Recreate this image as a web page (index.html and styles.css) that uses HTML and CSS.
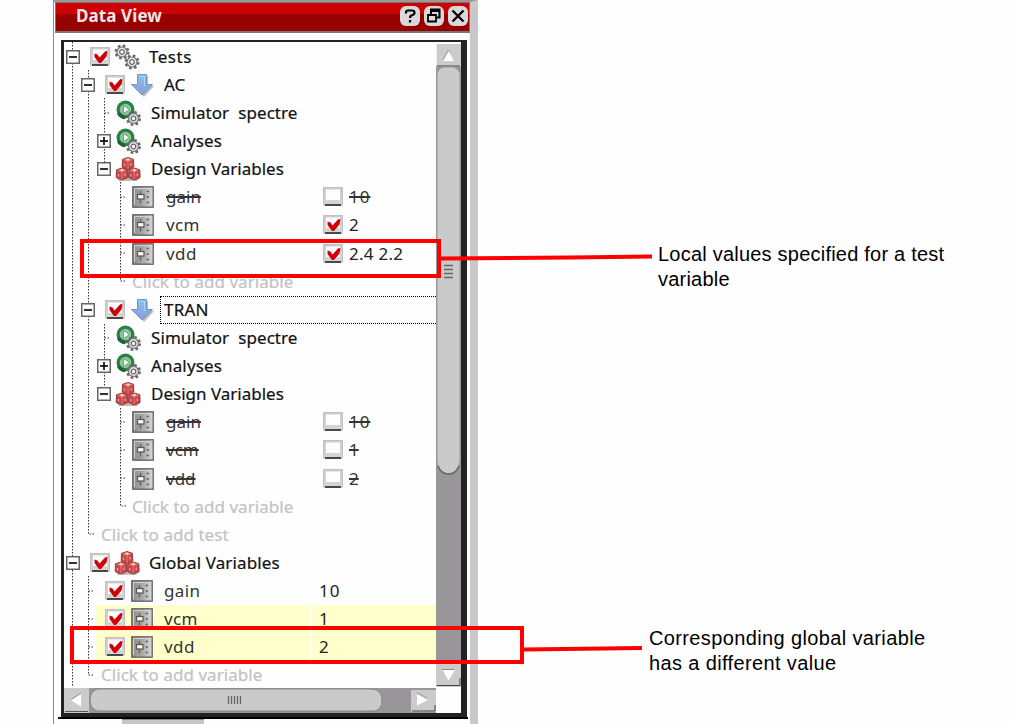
FILE: index.html
```html
<!DOCTYPE html>
<html lang="en">
<head>
<meta charset="utf-8">
<title>Data View</title>
<link rel="stylesheet" href="styles.css">
</head>
<body>
<svg class="defs" width="0" height="0" aria-hidden="true">
  <defs>
    <linearGradient id="gPanel" x1="0" x2="1"><stop offset="0" stop-color="#8c8c8c"/><stop offset=".5" stop-color="#a8a8a8"/><stop offset="1" stop-color="#dadada"/></linearGradient>
    <linearGradient id="gBox" x1="0" x2="0" y1="0" y2="1"><stop offset="0" stop-color="#ccc"/><stop offset="1" stop-color="#d6d6d6"/></linearGradient>
    <linearGradient id="gArrow" x1="0" x2="0" y1="0" y2="1"><stop offset="0" stop-color="#88c2e6"/><stop offset="1" stop-color="#8e9ade"/></linearGradient>
    <g id="gear">
      <circle r="6" fill="none" stroke="#666" stroke-width="3" stroke-dasharray="2.500 2.212"/>
      <circle r="5" fill="#e6e6e6" stroke="#777" stroke-width="1.200"/>
      <circle r="2.300" fill="#fff" stroke="#666" stroke-width="1.300"/>
    </g>
    <g id="cube">
      <path d="M0-6 5.5-4.2 5.8 3.5 0 6-5.8 3.5-5.5-4.2Z" fill="#c9484a" stroke="#8d3034" stroke-width=".9"/>
      <path d="M0-5.6 5-3.8 0-1.6-5-3.8Z" fill="#e07a74"/>
      <path d="M0-1.6V5.6" stroke="#e07a78" stroke-width="1"/>
      <path d="M-3.5 0V2.5M3-.5V2" stroke="#e99a98" stroke-width="1.3"/>
      <path d="M-1.6-3.9H1.6M0-5V-2.7" stroke="#ffe0b0" stroke-width="1.1"/>
    </g>
    <symbol id="i-gears" viewBox="0 0 26 26">
      <use href="#gear" x="8" y="8"/><use href="#gear" x="18" y="18"/>
    </symbol>
    <symbol id="i-run" viewBox="0 0 26 26">
      <circle cx="10.500" cy="9.500" r="7.400" fill="#8fc49a" stroke="#278044" stroke-width="3.200"/>
      <path d="M3.500 13A8 8 0 0 0 10 17.500" fill="none" stroke="#1c6234" stroke-width="3.500"/>
      <path d="M8.500 5.500 14.500 9.500 8.500 13.500Z" fill="#f2fff2" stroke="#4f9c62" stroke-width=".8"/>
      <use href="#gear" x="18.500" y="18.500"/>
    </symbol>
    <symbol id="i-cubes" viewBox="0 0 26 26">
      <path d="M2 22H25L22 25H4Z" fill="#bbb"/>
      <use href="#cube" x="13" y="7.500"/><use href="#cube" x="7" y="18"/><use href="#cube" x="19.300" y="18"/>
    </symbol>
    <symbol id="i-arrow" viewBox="0 0 26 26">
      <path d="M10 4H19V14H25L15 25 5 14H10Z" fill="#bbb"/>
      <path d="M8.500 2.500H17.500V12.500H23.500L13 23 2.500 12.500H8.500Z" fill="url(#gArrow)" stroke="#7795cb"/>
      <path d="M10.500 4.500H15.500V14" fill="none" stroke="#a9d6ee" stroke-width="1.200"/>
    </symbol>
    <symbol id="i-var" viewBox="0 0 26 26">
      <rect x="2.800" y="2.800" width="20.400" height="20.400" fill="url(#gPanel)" stroke="#606060" stroke-width="1.300"/>
      <path d="M4.500 21V4.500H21" fill="none" stroke="#d0d0d0"/>
      <path d="M10.500 7V19.500" stroke="#666" stroke-width="1.500"/>
      <path d="M16.500 7.500H19M16.500 13H19M16.500 18.500H19" stroke="#666" stroke-width="1.500"/>
      <rect x="7.500" y="10.500" width="6.500" height="4.500" fill="#fff8e8" stroke="#555" stroke-width="1.200"/>
    </symbol>
    <symbol id="i-off" viewBox="0 0 20 20">
      <rect x=".5" y=".5" width="19" height="17.500" fill="url(#gBox)" stroke="#c0c0c0"/>
      <path d="M3 2.500H17V13H3Z" fill="#fdfdfd"/>
      <rect x="2" y="17" width="16" height="2" fill="#484848"/>
    </symbol>
    <symbol id="i-on" viewBox="0 0 20 20">
      <use href="#i-off"/>
      <path d="M4.500 6.500 7.500 7.500 9.500 10.500 15.500 4 17.500 4.500 16.500 9.500 11 16H9L4.500 10Z" fill="#cf0008"/>
    </symbol>
    <symbol id="i-minus" viewBox="0 0 14 14"><rect x=".75" y=".75" width="12.500" height="12.500" fill="#fff" stroke="#666" stroke-width="1.500"/><path d="M3 7H11" stroke="#000" stroke-width="1.600"/></symbol>
    <symbol id="i-plus" viewBox="0 0 14 14"><use href="#i-minus"/><path d="M7 3V11" stroke="#000" stroke-width="1.600"/></symbol>
  </defs>
</svg>

<main class="page">
  <section class="dock">
    <header class="titlebar">
      <h1 class="title">Data View</h1>
      <div class="buttons">
        <svg class="tbtn" viewBox="0 0 20 20"><path d="M6 7.500V6Q6 4.500 8 4.500H12Q14.500 4.500 14.500 6.500T12.500 9Q10 9.500 10 12M10 14V16.500" fill="none" stroke="#000" stroke-width="2.200"/></svg>
        <svg class="tbtn" viewBox="0 0 20 20"><path d="M7 8V3.500H15.500V11.500H13M7 5H15.500" fill="none" stroke="#000" stroke-width="2"/><path d="M4 9H12V15.500H4Z" fill="#ddd" stroke="#000" stroke-width="1.800"/></svg>
        <svg class="tbtn" viewBox="0 0 20 20"><path d="M4.500 4.500 15.500 15.500M15.500 4.500 4.500 15.500" stroke="#000" stroke-width="2.300"/></svg>
      </div>
    </header>
    <div class="frame">
      <div class="tree">
        <svg class="guides" width="372" height="645" viewBox="64 42 372 645">
          <path d="M72.500 42V688M88.500 70V534H94M104.500 98V169M104.500 113H110M120.500 182V281H126M120.500 197H126M120.500 225H126M120.500 253H126M104.500 324V394M104.500 338H110M120.500 408V506H126M120.500 422H126M120.500 450H126M120.500 478H126M88.500 576V675H94M88.500 591H94M88.500 619H94M88.500 647H94"/>
        </svg>
        <div class="row l0"><svg class="exp"><use href="#i-minus"/></svg><svg class="chk"><use href="#i-on"/></svg><svg class="ico"><use href="#i-gears"/></svg><span class="name tests">Tests</span></div>
        <div class="row l1"><svg class="exp"><use href="#i-minus"/></svg><svg class="chk"><use href="#i-on"/></svg><svg class="ico"><use href="#i-arrow"/></svg><span class="name">AC</span></div>
        <div class="row l2 leaf"><svg class="ico"><use href="#i-run"/></svg><span class="name sim">Simulator&nbsp; spectre</span></div>
        <div class="row l2"><svg class="exp"><use href="#i-plus"/></svg><svg class="ico"><use href="#i-run"/></svg><span class="name ana">Analyses</span></div>
        <div class="row l2"><svg class="exp"><use href="#i-minus"/></svg><svg class="ico"><use href="#i-cubes"/></svg><span class="name">Design Variables</span></div>
        <div class="row l3"><div class="cell"><svg class="ico"><use href="#i-var"/></svg><span class="name off">gain</span></div><svg class="chk"><use href="#i-off"/></svg><span class="val off ten">10</span></div>
        <div class="row l3"><div class="cell"><svg class="ico"><use href="#i-var"/></svg><span class="name var">vcm</span></div><svg class="chk"><use href="#i-on"/></svg><span class="val">2</span></div>
        <div class="row l3"><div class="cell"><svg class="ico"><use href="#i-var"/></svg><span class="name var">vdd</span></div><svg class="chk"><use href="#i-on"/></svg><span class="val multi">2.4 2.2</span></div>
        <div class="row add"><span class="hint">Click to add variable</span></div>
        <div class="row l1 focus"><svg class="exp"><use href="#i-minus"/></svg><svg class="chk"><use href="#i-on"/></svg><svg class="ico"><use href="#i-arrow"/></svg><span class="name">TRAN</span></div>
        <div class="row l2 leaf"><svg class="ico"><use href="#i-run"/></svg><span class="name sim">Simulator&nbsp; spectre</span></div>
        <div class="row l2"><svg class="exp"><use href="#i-plus"/></svg><svg class="ico"><use href="#i-run"/></svg><span class="name ana">Analyses</span></div>
        <div class="row l2"><svg class="exp"><use href="#i-minus"/></svg><svg class="ico"><use href="#i-cubes"/></svg><span class="name">Design Variables</span></div>
        <div class="row l3"><div class="cell"><svg class="ico"><use href="#i-var"/></svg><span class="name off">gain</span></div><svg class="chk"><use href="#i-off"/></svg><span class="val off ten">10</span></div>
        <div class="row l3"><div class="cell"><svg class="ico"><use href="#i-var"/></svg><span class="name off">vcm</span></div><svg class="chk"><use href="#i-off"/></svg><span class="val off">1</span></div>
        <div class="row l3"><div class="cell"><svg class="ico"><use href="#i-var"/></svg><span class="name off">vdd</span></div><svg class="chk"><use href="#i-off"/></svg><span class="val off">2</span></div>
        <div class="row add"><span class="hint">Click to add variable</span></div>
        <div class="row add2"><span class="hint">Click to add test</span></div>
        <div class="row l0"><svg class="exp"><use href="#i-minus"/></svg><svg class="chk"><use href="#i-on"/></svg><svg class="ico"><use href="#i-cubes"/></svg><span class="name glob">Global Variables</span></div>
        <div class="row g"><div class="cell"><svg class="chk"><use href="#i-on"/></svg><svg class="ico"><use href="#i-var"/></svg><span class="name var">gain</span></div><span class="val gval ten">10</span></div>
        <div class="row g diff"><div class="cell"><svg class="chk"><use href="#i-on"/></svg><svg class="ico"><use href="#i-var"/></svg><span class="name var">vcm</span></div><span class="val gval">1</span></div>
        <div class="row g diff"><div class="cell"><svg class="chk"><use href="#i-on"/></svg><svg class="ico"><use href="#i-var"/></svg><span class="name var">vdd</span></div><span class="val gval">2</span></div>
        <div class="row add2"><span class="hint">Click to add variable</span></div>
      </div>
      <svg class="vbar" viewBox="0 0 25 645">
        <rect y="2" width="25" height="643" fill="#989698"/>
        <rect y="2" width="25" height="23" fill="#cbcbcb"/><path d="M12.500 9 18 19H7Z" fill="#fff"/><path d="M7 18 12 8.500 14 9" fill="none" stroke="#999"/><path d="M1 24H24" stroke="#444"/><path d="M.5 2V23" stroke="#eee"/>
        <path d="M1 32Q3 25 9 25H16Q22 25 24 32V419Q22 432 12.500 432T1 419Z" fill="#cacaca" stroke="#9c9c9c"/>
        <path d="M2 424Q5 432 12.500 432T23 424" fill="none" stroke="#666" stroke-width="1.500"/>
        <path d="M8 223.500H17M8 227.500H17M8 231.500H17M8 235.500H17" stroke="#666" stroke-width="1.500"/>
        <rect y="622" width="25" height="23" fill="#cbcbcb"/><path d="M6.500 628H19L12.500 638.500Z" fill="#fff"/><path d="M6 627.500H18" stroke="#888"/><path d="M1 643.500H24V636" fill="none" stroke="#444"/>
      </svg>
      <svg class="hbar" viewBox="0 0 372 25">
        <rect width="372" height="25" fill="#989698"/>
        <rect width="25" height="25" fill="#cbcbcb"/><path d="M7 12.500 17 6V18.500Z" fill="#fff"/><path d="M7 11.500 17 5" stroke="#999"/><path d="M1 23.500H24" stroke="#555"/>
        <path d="M34 1H307Q318 1 318 12.500T307 23H34Q26 21 26 12T34 1Z" fill="#cacaca" stroke="#858585"/>
        <path d="M164.500 8V16M167.500 8V16M170.500 8V16M173.500 8V16M176.500 8V16" stroke="#666" stroke-width="1.300"/>
        <rect x="347" y="2" width="25" height="22" fill="#cbcbcb"/><path d="M353 6 364 12 353 17.500Z" fill="#fff"/><path d="M353 5 363 10" stroke="#999"/><path d="M348 23H371V17" fill="none" stroke="#444"/>
      </svg>
    </div>
    <div class="baseline"></div>
    <div class="tab"></div>
  </section>

  <svg class="marks" width="1013" height="724" viewBox="0 0 1013 724">
    <rect x="82" y="241" width="357" height="35"/>
    <path d="M441 258.500 570 257.500 652 256.500"/>
    <rect x="72" y="628" width="450" height="34"/>
    <path d="M524 649.500 642 648"/>
  </svg>
  <p class="note note-local">Local values specified for a test<br>variable</p>
  <p class="note note-global">Corresponding global variable<br>has a different value</p>
</main>
</body>
</html>
```

FILE: styles.css
```css
* { box-sizing: border-box; }
body { margin: 0; background: #fefefe; font-family: "Noto Sans", "Open Sans", sans-serif; }
.defs { position: absolute; }
.page { position: relative; width: 1013px; height: 724px; overflow: hidden; }

.dock {
  display: flex; flex-direction: column;
  width: 425px; height: 724px; margin-left: 53px; padding-left: 2px;
  border-top: 2px solid #999; border-left: 1px solid #8a8a8a; border-right: 8px solid #c9c7c9;
}
.titlebar {
  display: flex; align-items: center; justify-content: space-between;
  flex: none; height: 31px; margin-left: -1px; padding: 0 1px 3px 20px;
  background: linear-gradient(#cc0000 0 11px, #980000 11px);
  border: 1px solid #777; border-bottom-width: 2px;
}
.title { margin: 0; color: #f3e5e5; font-size: 17px; line-height: 24px; font-weight: 700; letter-spacing: 0.1px; }
.buttons { display: flex; gap: 4px; }
.tbtn { width: 20px; height: 20px; background: #d8d8d8; border-radius: 6px; }

.frame {
  display: grid; grid-template-columns: 372px 25px; grid-template-rows: 645px 25px; row-gap: 1px;
  flex: none; width: 406px; height: 677px; margin: 7px 0 0 5px;
  border-style: solid; border-color: #222; border-width: 2px 6px 4px 3px;
}
.tree { position: relative; overflow: hidden; padding-top: 0.6px; }
.guides { position: absolute; left: 0; top: 0; }
.guides path { fill: none; stroke: #333; stroke-width: 1; stroke-dasharray: 1.500 1.500; }
.vbar { width: 25px; height: 645px; display: block; }
.hbar { width: 372px; height: 25px; display: block; }

.row { position: relative; display: flex; align-items: center; height: 28.140px; white-space: pre; font-size: 17px; line-height: 28px; color: #111; }
.exp { flex: none; width: 14px; height: 14px; }
.chk { flex: none; width: 20px; height: 20px; }
.ico { flex: none; width: 26px; height: 26px; }
.name { margin-left: 9px; -webkit-text-stroke: 0.200px; }
.tests { letter-spacing: 0.5px; }
.sim { letter-spacing: 0.080px; }
.ana { letter-spacing: 0.150px; }
.glob { letter-spacing: 0.120px; }
.l0 { padding-left: 2px; }
.l1 { padding-left: 17px; }
.l0 .chk, .l1 .chk { margin: 0 4px 0 10px; }
.l2 { padding-left: 33px; }
.l2 .ico { margin-left: 4px; }
.l2 .name { margin-left: 10px; }
.leaf { padding-left: 47px; }
.cell { display: flex; align-items: center; flex: none; }
.l3 .cell { width: 259px; padding-left: 66px; }
.g .cell { width: 255px; padding-left: 41px; }
.g .ico { margin-left: 4px; }
.l3 .name { margin-left: 10px; }
.name.var { letter-spacing: 0.400px; }
.val { margin-left: 6px; color: #222; }
.val.gval { margin-left: 0; }
.ten { letter-spacing: 1px; }
.multi { letter-spacing: 0.250px; }
.off { color: #333; text-decoration: line-through; text-decoration-thickness: 2px; }
.var { color: #333; }
.name.off, .name.var { -webkit-text-stroke: 0; }
.hint { color: #c2c2c2; letter-spacing: 0.040px; -webkit-text-stroke: 0.200px; }
.add { padding-left: 68px; }
.add2 { padding-left: 37px; }
.diff { background: linear-gradient(90deg, transparent 32px, #ffffcb 32px 246px, #fff 246px 248px, #ffffcb 248px); }
.focus .name { flex: 1; height: 28px; margin-left: 5px; padding-left: 3px; border: 1px dotted #000; border-right: 0; line-height: 26px; letter-spacing: 0.200px; }

.baseline { flex: none; width: 410px; height: 2px; margin-left: 2px; background: #000; }
.tab { width: 82px; height: 5px; margin-left: 66px; background: #c6c6c6; border-top: 1px solid #888; }

.marks { position: absolute; left: 0; top: 0; }
.marks rect, .marks path { fill: none; stroke: #fe0000; stroke-width: 4; }
.note { position: absolute; margin: 0; font: 20px/25px "Liberation Sans", Arial, sans-serif; color: #000; white-space: nowrap; }
.note-local { left: 658px; top: 242px; letter-spacing: 0.220px; }
.note-global { left: 649px; top: 626px; letter-spacing: 0.370px; }
```
